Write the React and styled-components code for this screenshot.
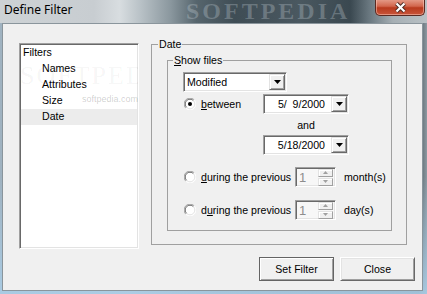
import styled, { createGlobalStyle } from "styled-components";

const GlobalStyle = createGlobalStyle`
  html, body {
    margin: 0;
    padding: 0;
    background: #f0f0f0;
  }
  body {
    font-family: "Liberation Sans", Arial, sans-serif;
    font-size: 10.6px;
    color: #000;
  }
`;

const Window = styled.div`
  width: 427px;
  height: 294px;
  display: flex;
  flex-direction: column;
  overflow: hidden;
  background: linear-gradient(180deg, rgba(160, 190, 215, 0) 60%, rgba(170, 205, 230, 0.9) 100%),
    linear-gradient(90deg, #9fb2c0 0%, #b9c6cf 30%, #7d8c95 50%, #5d6d77 75%, #4b5960 98%, #8e9aa2 100%);
`;

const TitleBar = styled.div`
  position: relative;
  height: 23px;
  flex-shrink: 0;
  display: flex;
  justify-content: space-between;
  align-items: flex-start;
  overflow: hidden;
  background: linear-gradient(
    90deg,
    #cdd2d5 0%,
    #c8cdd1 22%,
    #d8dde0 28%,
    #b8c1c6 33%,
    #8a979e 40%,
    #56656d 46%,
    #3f4d55 55%,
    #4a5860 70%,
    #3a4850 82%,
    #6f7d85 87%,
    #a6afb4 92%,
    #b9c1c5 100%
  );
`;

const Title = styled.span`
  font-family: "Noto Sans", "Open Sans", sans-serif;
  font-size: 12px;
  line-height: 16px;
  padding: 2px 0 0 4px;
  color: #000;
`;

const TitleWatermark = styled.span`
  position: absolute;
  left: 186px;
  top: 0;
  line-height: 22px;
  font-family: "Liberation Serif", serif;
  font-size: 24px;
  font-weight: bold;
  letter-spacing: 3px;
  color: rgba(210, 220, 226, 0.28);
  pointer-events: none;
`;

const CloseButton = styled.div`
  width: 48px;
  height: 16px;
  margin: -1px 2px 0 0;
  display: flex;
  align-items: center;
  justify-content: center;
  border: 1px solid #5a2a22;
  border-top: none;
  border-radius: 0 0 5px 5px;
  background: linear-gradient(180deg, #e6a08e 0%, #d2664d 45%, #b83a1e 55%, #c8553a 100%);
  box-shadow: inset 0 0 0 1px rgba(255, 210, 195, 0.5);
`;

const FrameBody = styled.div`
  flex: 1;
  display: flex;
  padding: 0 4px 3px 2px;
`;

const Client = styled.div`
  flex: 1;
  display: flex;
  flex-direction: column;
  background: #f0f0f0;
  border: 1px solid #8a959c;
  padding: 19px 7px 0 16px;
`;

const MainRow = styled.div`
  display: flex;
  align-items: flex-start;
  gap: 12px;
`;

const Tree = styled.div`
  position: relative;
  width: 120px;
  height: 206px;
  box-sizing: border-box;
  background: #fff;
  border: 1px solid;
  border-color: #a0a0a0 #fff #fff #a0a0a0;
  box-shadow: inset 1px 1px 0 #696969, inset -1px -1px 0 #e3e3e3;
  padding: 1px 1px;
  overflow: hidden;
`;

const TreeItem = styled.div`
  position: relative;
  z-index: 1;
  height: 16px;
  line-height: 15px;
  padding-left: ${(p) => (p.$root ? 2 : 21)}px;
  background: ${(p) => (p.$selected ? "#ececec" : "transparent")};
  white-space: nowrap;
`;

const TreeWatermark = styled.span`
  position: absolute;
  left: ${(p) => p.$left}px;
  top: ${(p) => p.$top}px;
  font-family: ${(p) => (p.$big ? '"Liberation Serif", serif' : '"Liberation Sans", sans-serif')};
  font-size: ${(p) => (p.$big ? 26 : 9)}px;
  letter-spacing: ${(p) => (p.$big ? 2 : 0)}px;
  color: ${(p) => (p.$big ? "rgba(0, 0, 0, 0.05)" : "rgba(0, 0, 0, 0.2)")};
  white-space: nowrap;
  pointer-events: none;
`;

const GroupBox = styled.fieldset`
  margin: ${(p) => (p.$inner ? "0" : "-5px 0 0 0")};
  padding: 0;
  min-width: 0;
  box-sizing: border-box;
  width: ${(p) => p.$width}px;
  height: ${(p) => p.$height}px;
  border: 1px solid #a0a0a0;
`;

const GroupLegend = styled.legend`
  margin-left: ${(p) => p.$indent}px;
  padding: 0 1px;
  line-height: 13px;
  font-size: 10.6px;
`;

const GroupBody = styled.div`
  display: flex;
  flex-direction: column;
  align-items: flex-start;
  padding: ${(p) => p.$pad};
`;

const Field = styled.div`
  box-sizing: border-box;
  width: ${(p) => p.$width}px;
  height: 20px;
  display: flex;
  align-items: center;
  background: ${(p) => (p.$disabled ? "#f7f7f7" : "#fff")};
  border: 1px solid;
  border-color: #a0a0a0 #fff #fff #a0a0a0;
  box-shadow: inset 1px 1px 0 #696969, inset -1px -1px 0 #e3e3e3;
  padding: 1px;
`;

const FieldText = styled.span`
  flex: 1;
  white-space: pre;
  text-align: ${(p) => (p.$right ? "right" : "left")};
  padding: ${(p) => (p.$right ? "0 6px 0 0" : "0 0 0 2px")};
  color: ${(p) => (p.$disabled ? "#8d8d8d" : "#000")};
  font-size: ${(p) => (p.$big ? 13 : 10.6)}px;
`;

const DropButton = styled.div`
  box-sizing: border-box;
  width: 16px;
  height: 16px;
  display: flex;
  align-items: center;
  justify-content: center;
  background: #f0f0f0;
  border: 1px solid;
  border-color: #e3e3e3 #696969 #696969 #e3e3e3;
  box-shadow: inset 1px 1px 0 #fff, inset -1px -1px 0 #a0a0a0;
`;

const SpinButtons = styled.div`
  display: flex;
  flex-direction: column;
  gap: 1px;
  margin-right: 1px;
`;

const SpinButton = styled.div`
  box-sizing: border-box;
  width: 15px;
  height: 8px;
  display: flex;
  align-items: center;
  justify-content: center;
  background: #f0f0f0;
  border: 1px solid;
  border-color: #e3e3e3 #a0a0a0 #a0a0a0 #e3e3e3;
  box-shadow: inset 1px 1px 0 #fff;
`;

const Row = styled.div`
  display: flex;
  align-items: center;
  margin-top: ${(p) => p.$top || 0}px;
`;

const RadioLabel = styled.label`
  width: ${(p) => p.$width}px;
  display: flex;
  align-items: center;
  gap: 5px;
  padding-left: 1px;
  box-sizing: border-box;
  white-space: nowrap;
`;

const Indented = styled.div`
  margin-left: 80px;
`;

const AndLabel = styled.div`
  width: 86px;
  margin-left: 80px;
  box-sizing: border-box;
  padding-top: 5px;
  height: 21px;
  line-height: 13px;
  text-align: center;
`;

const Unit = styled.span`
  margin-left: 8px;
`;

const ButtonRow = styled.div`
  display: flex;
  justify-content: flex-end;
  gap: 6px;
  margin-top: 8px;
`;

const Button = styled.button`
  width: 75px;
  height: 24px;
  box-sizing: border-box;
  font-family: "Liberation Sans", Arial, sans-serif;
  font-size: 10.6px;
  color: #000;
  background: #f0f0f0;
  padding: 0;
  border: 1px solid;
  border-color: ${(p) => (p.$default ? "#646464" : "#fff #696969 #696969 #fff")};
  box-shadow: ${(p) =>
    p.$default
      ? "inset 1px 1px 0 #fff, inset -1px -1px 0 #a0a0a0"
      : "inset 1px 1px 0 #e3e3e3, inset -1px -1px 0 #a0a0a0"};
`;

const Radio = ({ checked }) => (
  <svg width="12" height="12" viewBox="0 0 12 12">
    <circle cx="6" cy="6" r="5.5" fill="#fff" />
    <path d="M1.8 10.2 A5.8 5.8 0 0 1 10.2 1.8" stroke="#a0a0a0" fill="none" />
    <path d="M10.2 1.8 A5.8 5.8 0 0 1 1.8 10.2" stroke="#fff" fill="none" />
    <path d="M2.6 9.4 A4.7 4.7 0 0 1 9.4 2.6" stroke="#696969" fill="none" />
    <path d="M9.4 2.6 A4.7 4.7 0 0 1 2.6 9.4" stroke="#e3e3e3" fill="none" />
    {checked && <circle cx="6" cy="6" r="2" fill="#000" />}
  </svg>
);

const Arrow = ({ color = "#000", up, w = 7, h = 4 }) => (
  <svg width={w} height={h} viewBox={`0 0 ${w} ${h}`}>
    <polygon
      points={up ? `0,${h} ${w},${h} ${w / 2},0` : `0,0 ${w},0 ${w / 2},${h}`}
      fill={color}
    />
  </svg>
);

const Combo = ({ width, value, right }) => (
  <Field $width={width}>
    <FieldText $right={right}>{value}</FieldText>
    <DropButton>
      <Arrow />
    </DropButton>
  </Field>
);

const Spin = () => (
  <Field $width={41} $disabled>
    <FieldText $disabled $big>1</FieldText>
    <SpinButtons>
      <SpinButton>
        <Arrow up color="#a0a0a0" w={5} h={3} />
      </SpinButton>
      <SpinButton>
        <Arrow color="#a0a0a0" w={5} h={3} />
      </SpinButton>
    </SpinButtons>
  </Field>
);

const Filters = ["Names", "Attributes", "Size", "Date"];

export default function App() {
  return (
    <>
      <GlobalStyle />
      <Window>
        <TitleBar>
          <Title>Define Filter</Title>
          <TitleWatermark>SOFTPEDIA</TitleWatermark>
          <CloseButton>
            <svg width="13" height="11" viewBox="0 0 13 11">
              <path d="M2.5 1.5 L10.5 9.5 M10.5 1.5 L2.5 9.5" stroke="#4a2a24" strokeWidth="4" />
              <path d="M2.5 1.5 L10.5 9.5 M10.5 1.5 L2.5 9.5" stroke="#fff" strokeWidth="2.2" />
            </svg>
          </CloseButton>
        </TitleBar>
        <FrameBody>
          <Client>
            <MainRow>
              <Tree>
                <TreeItem $root>Filters</TreeItem>
                {Filters.map((f) => (
                  <TreeItem key={f} $selected={f === "Date"}>
                    {f}
                  </TreeItem>
                ))}
                <TreeWatermark $big $left={0} $top={17}>
                  SOFTPEDIA
                </TreeWatermark>
                <TreeWatermark $left={62} $top={50}>
                  softpedia.com
                </TreeWatermark>
              </Tree>
              <GroupBox $width={256} $height={207}>
                <GroupLegend $indent={6}>Date</GroupLegend>
                <GroupBody $pad="3px 14px 0 15px">
                  <GroupBox $inner $width={225} $height={177}>
                    <GroupLegend $indent={5}>
                      <u>S</u>how files
                    </GroupLegend>
                    <GroupBody $pad="5px 0 0 15px">
                      <Combo width={104} value="Modified" />
                      <Row $top={2}>
                        <RadioLabel $width={80}>
                          <Radio checked />
                          <span>
                            <u>b</u>etween
                          </span>
                        </RadioLabel>
                        <Combo width={86} value="5/  9/2000" right />
                      </Row>
                      <AndLabel>and</AndLabel>
                      <Indented>
                        <Combo width={86} value="5/18/2000" right />
                      </Indented>
                      <Row $top={12}>
                        <RadioLabel $width={112}>
                          <Radio />
                          <span>
                            <u>d</u>uring the previous
                          </span>
                        </RadioLabel>
                        <Spin />
                        <Unit>month(s)</Unit>
                      </Row>
                      <Row $top={13}>
                        <RadioLabel $width={112}>
                          <Radio />
                          <span>
                            d<u>u</u>ring the previous
                          </span>
                        </RadioLabel>
                        <Spin />
                        <Unit>day(s)</Unit>
                      </Row>
                    </GroupBody>
                  </GroupBox>
                </GroupBody>
              </GroupBox>
            </MainRow>
            <ButtonRow>
              <Button $default>Set Filter</Button>
              <Button>Close</Button>
            </ButtonRow>
          </Client>
        </FrameBody>
      </Window>
    </>
  );
}
